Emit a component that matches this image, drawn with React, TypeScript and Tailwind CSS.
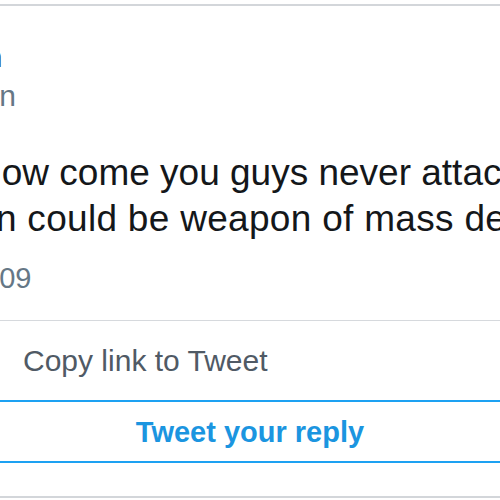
const font = "font-['Liberation_Sans','Helvetica_Neue',Arial,sans-serif]";

export default function App() {
  return (
    <div className={`w-[500px] h-[500px] overflow-hidden bg-white ${font}`}>
      <div className="pt-[4px]">
        <div className="border-t-2 border-[#d3d6da]">
          {/* header: name + handle, avatar is off to the left */}
          <div className="pt-[33px] whitespace-nowrap">
            <div className="-ml-[71px] text-[30px] leading-[36px] font-bold text-[#14171a]">Ryan</div>
            <div className="-ml-[73px] text-[30px] leading-[41px] text-[#657786]">@ryan</div>
          </div>

          <div className="mt-[34px] -ml-[25px] whitespace-nowrap text-[37px] leading-[46px] text-[#14171a]">
            <div>How come you guys never attack North Korea? Kim Jong Un is a</div>
            <div className="tracking-[0.3px]">an could be weapon of mass destruction</div>
          </div>

          <div className="mt-[19px] pb-[25px] -ml-[25px] text-[29px] leading-[34px] text-[#657786]">1:09</div>
        </div>

        <div className="border-t border-[#d6d9dd] h-[80px] flex items-center px-[23px]">
          <span className="text-[30px] leading-[36px] text-[#505a65]">Copy link to Tweet</span>
        </div>

        <div className="border-y-2 border-[#1da1f2] h-[63px] flex items-center justify-center">
          <span className="text-[29px] leading-[34px] font-bold text-[#1b95e0]">Tweet your reply</span>
        </div>

        <div className="h-[33px]" />
        <div className="border-t-2 border-[#d3d6da]" />
      </div>
    </div>
  );
}
